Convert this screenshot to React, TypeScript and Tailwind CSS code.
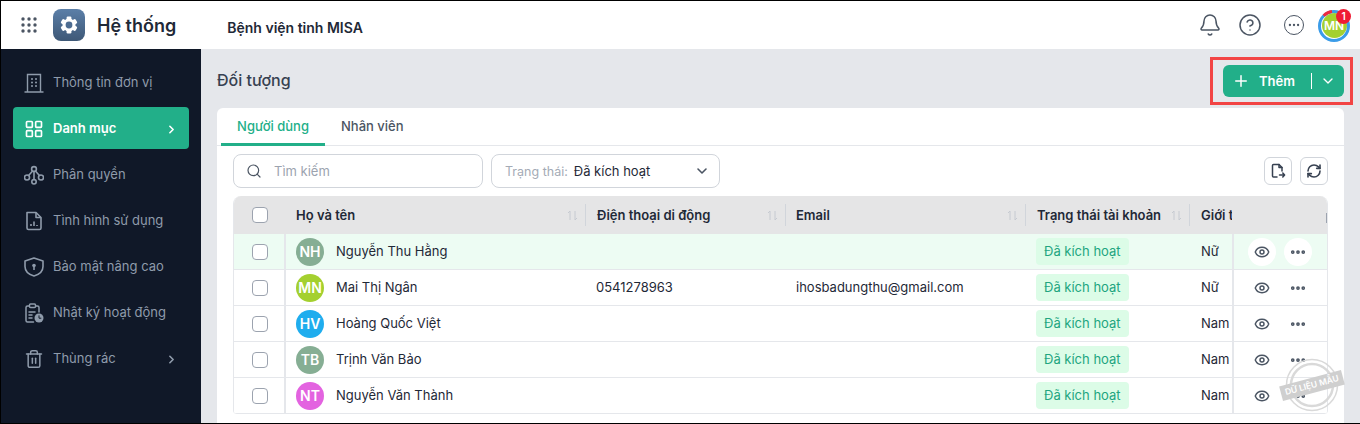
import React from "react";
import { Bell, ChevronDown, ChevronRight, CircleHelp, Ellipsis, Eye, Plus, RefreshCw, Search, Trash2, LayoutGrid } from "lucide-react";

const Apps = () => (
  <svg width="16" height="16" viewBox="0 0 16 16" fill="#4b5563">
    {[2, 8, 14].map((y) => [2, 8, 14].map((x) => <circle key={`${x}-${y}`} cx={x} cy={y} r="1.7" />))}
  </svg>
);

const Logo = () => (
  <div className="w-8 h-8 rounded-lg bg-gradient-to-b from-[#5b7fa8] to-[#3e5877] flex items-center justify-center">
    <svg width="20" height="20" viewBox="0 0 20 20">
      {[0, 60, 120].map((a) => (
        <rect key={a} x="7.600" y="1.500" width="4.800" height="17" rx="1.200" fill="#fff" transform={`rotate(${a} 10 10)`} />
      ))}
      <circle cx="10" cy="10" r="6.500" fill="#fff" />
      <circle cx="10" cy="10" r="3.400" fill="#4d6c91" />
    </svg>
  </div>
);

const BuildingIcon = () => (
  <svg width="20" height="20" viewBox="0 0 20 20" fill="none" stroke="currentColor" strokeWidth="1.4">
    <path d="M3.500 19V1.500h13V19M0.500 19h19" />
    <path d="M8 6h.01M12 6h.01M8 9.500h.01M12 9.500h.01M8 13h.01M12 13h.01" strokeWidth="2" strokeLinecap="round" />
  </svg>
);

const TreeIcon = () => (
  <svg width="20" height="20" viewBox="0 0 20 20" fill="none" stroke="currentColor" strokeWidth="1.6">
    <circle cx="10" cy="4" r="2.400" />
    <circle cx="3" cy="12.500" r="2.500" />
    <circle cx="17" cy="12.500" r="2.500" />
    <circle cx="10" cy="16.800" r="2.200" />
    <path d="M8.600 6L4.600 10.500M11.400 6l4 4.500M10 6.400v8.200" />
  </svg>
);

const ReportIcon = () => (
  <svg width="20" height="20" viewBox="0 0 20 20" fill="none" stroke="currentColor" strokeWidth="1.6" strokeLinejoin="round">
    <path d="M3 1.500h9l5 5v10.500a1.500 1.500 0 0 1-1.500 1.500h-11A1.500 1.500 0 0 1 3 17z" />
    <path d="M12 1.500v5h5M7 15v-2M10 15v-4.500M13 15v-1" />
  </svg>
);

const ShieldIcon = () => (
  <svg width="20" height="20" viewBox="0 0 20 20" fill="none" stroke="currentColor" strokeWidth="1.6" strokeLinejoin="round">
    <path d="M10 1l9 3v5.500c0 4.800-3.800 8-9 9.500-5.200-1.500-9-4.700-9-9.500V4z" />
    <circle cx="10" cy="8.500" r="1.800" fill="currentColor" stroke="none" />
    <path d="M10 9.500v3.500" />
  </svg>
);

const LogIcon = () => (
  <svg width="20" height="20" viewBox="0 0 20 20" fill="none" stroke="currentColor" strokeWidth="1.5" strokeLinecap="round">
    <path d="M5 3H3.500A1.500 1.500 0 0 0 2 4.500v13A1.500 1.500 0 0 0 3.500 19h6M12 3h1.500A1.500 1.500 0 0 1 15 4.500V9" />
    <rect x="5.500" y="1" width="6" height="3.500" rx="1" />
    <path d="M5 9h6M5 12h3M5 15h3" />
    <circle cx="15" cy="15" r="4.500" fill="currentColor" stroke="none" />
    <path d="M15 12.800v2.400h1.900" stroke="#101828" strokeWidth="1" />
  </svg>
);

const ExportIcon = () => (
  <svg width="16" height="16" viewBox="0 0 16 16" fill="none" stroke="#374151" strokeWidth="1.500" strokeLinejoin="round" strokeLinecap="round">
    <path d="M7 14H3.500A1 1 0 0 1 2.500 13V2.500a1 1 0 0 1 1-1H9l3 3V8" />
    <path d="M9 1.500v3h3M9.500 12h5M12.800 10l1.800 2-1.800 2" />
  </svg>
);

const SortIcon = () => (
  <svg width="11" height="11" viewBox="0 0 11 11" fill="none" stroke="#c6cad1" strokeWidth="1">
    <path d="M3 10V1L1 3M8 1v9l2-2" />
  </svg>
);

const AvatarRing = () => (
  <svg width="32" height="32" viewBox="0 0 32 32" fill="none" strokeWidth="3" className="absolute inset-0">
    <circle cx="16" cy="16" r="14.500" stroke="#3b9ce8" />
    <path d="M5.700 5.700A14.500 14.500 0 0 1 14 1.600" stroke="#ef2b3f" />
  </svg>
);

const menu = [
  { label: "Thông tin đơn vị", icon: <BuildingIcon /> },
  { label: "Danh mục", icon: <LayoutGrid size={24} strokeWidth={2} />, active: true, arrow: true },
  { label: "Phân quyền", icon: <TreeIcon /> },
  { label: "Tình hình sử dụng", icon: <ReportIcon /> },
  { label: "Bảo mật nâng cao", icon: <ShieldIcon /> },
  { label: "Nhật ký hoạt động", icon: <LogIcon /> },
  { label: "Thùng rác", icon: <Trash2 size={24} strokeWidth={1.8} />, arrow: true },
];

const rows = [
  { code: "NH", color: "bg-[#86ae94]", name: "Nguyễn Thu Hằng", gender: "Nữ", hover: true },
  { code: "MN", color: "bg-[#a4d02f]", name: "Mai Thị Ngân", phone: "0541278963", email: "ihosbadungthu@gmail.com", gender: "Nữ" },
  { code: "HV", color: "bg-[#1fadee]", name: "Hoàng Quốc Việt", gender: "Nam" },
  { code: "TB", color: "bg-[#86ae94]", name: "Trịnh Văn Bảo", gender: "Nam" },
  { code: "NT", color: "bg-[#e363e0]", name: "Nguyễn Văn Thành", gender: "Nam" },
];

const Check = () => <div className="w-[16px] h-[16px] rounded-[4px] border border-[#9ca3af] bg-white" />;

const HeadCell = ({ label, className }: { label: string; className: string }) => (
  <div className={`flex items-center justify-between h-full ${className}`}>
    <span className="font-semibold text-[#1f2937] whitespace-nowrap pt-[2px]">{label}</span>
    <div className="flex items-center gap-[7px] h-[22px]">
      <SortIcon />
      <div className="w-px h-full bg-[#d1d5db]" />
    </div>
  </div>
);

export default function App() {
  return (
    <div className="w-[1360px] h-[424px] overflow-hidden border-l border-t border-b border-black flex flex-col text-[13px] text-[#1f2937] relative" style={{ fontFamily: "Inter, 'Noto Sans', sans-serif" }}>
      <header className="h-[48px] shrink-0 bg-white flex items-center pl-[20px] pr-[10px]">
        <Apps />
        <div className="ml-[16px]"><Logo /></div>
        <span className="ml-[12px] text-[18px] font-semibold text-[#1f2937]">Hệ thống</span>
        <span className="ml-[51px] text-[14px] font-semibold text-[#1f2937] pt-[4px]">Bệnh viện tỉnh MISA</span>
        <div className="ml-auto flex items-center text-[#4b5563]">
          <Bell size={24} strokeWidth={1.5} />
          <CircleHelp size={24} strokeWidth={1.5} className="ml-[16px]" />
          <div className="ml-[22px] w-[20px] h-[20px] rounded-full border-[1.5px] border-[#4b5563] flex items-center justify-center">
            <Ellipsis size={14} />
          </div>
          <div className="ml-[14px] w-[32px] h-[32px] rounded-full flex items-center justify-center relative mt-[1px]">
            <AvatarRing />
            <div className="w-[25px] h-[25px] rounded-full bg-[#a4d02f] text-white text-[12px] font-semibold flex items-center justify-center">MN</div>
            <div className="absolute -top-px -right-px w-[15px] h-[15px] rounded-full bg-[#ef1c35] text-white text-[10px] font-semibold flex items-center justify-center">1</div>
          </div>
        </div>
      </header>

      <div className="flex flex-1 min-h-0">
        <aside className="w-[200px] shrink-0 bg-[#101828] px-[12px] pt-[12px]">
          {menu.map((m) => (
            <div key={m.label} className={`h-[42px] mb-[4px] pt-[2px] rounded-[4px] flex items-center pl-[11px] pr-[11px] ${m.active ? "bg-[#22af89] text-white font-semibold" : "text-[#8f9bab]"}`}>
              <span className="w-[20px] flex justify-center">{m.icon}</span>
              <span className="ml-[9px]">{m.label}</span>
              {m.arrow && <ChevronRight size={13} strokeWidth={3} className="ml-auto" />}
            </div>
          ))}
        </aside>

        <main className="flex-1 min-w-0 bg-[#e5e7eb] pl-[16px] pr-[16px] flex flex-col">
          <div className="h-[59px] shrink-0 flex items-center justify-between">
            <h1 className="text-[16px] font-medium text-[#374151] mt-[2px]">Đối tượng</h1>
            <div className="border-[3px] border-[#f24444] pl-[10px] pr-[6px] py-[5px] mt-[4px] -mr-[9px]">
              <div className="w-[121px] h-[32px] rounded-[6px] bg-[#22af89] text-white flex items-center pl-[9px]">
                <Plus size={18} strokeWidth={2} />
                <span className="ml-[9px] font-semibold pt-[2px]">Thêm</span>
                <div className="ml-[16px] w-px h-[16px] bg-white" />
                <ChevronDown size={16} strokeWidth={2} className="ml-[8px]" />
              </div>
            </div>
          </div>

          <div className="flex-1 bg-white rounded-t-[6px] flex flex-col min-h-0">
            <div className="h-[38px] shrink-0 border-b border-[#e5e7eb] flex px-[4px]">
              <div className="w-[104px] flex items-center justify-center text-[#22af89] font-medium border-b-[3px] border-[#22af89] h-[38px] pt-[2px]">Người dùng</div>
              <div className="ml-[16px] font-medium text-[#4b5563] h-[37px] flex items-center">Nhân viên</div>
            </div>

            <div className="h-[50px] shrink-0 flex items-center px-[16px]">
              <div className="w-[250px] h-[34px] rounded-[8px] border border-[#d1d5db] flex items-center pl-[12px] text-[#9ca3af]">
                <Search size={16} strokeWidth={1.8} className="text-[#4b5563]" />
                <span className="ml-[12px] pt-[2px]">Tìm kiếm</span>
              </div>
              <div className="ml-[8px] w-[229px] h-[34px] rounded-[8px] border border-[#d1d5db] flex items-center pl-[13px] pr-[9px]">
                <span className="text-[#a4abb6] text-[12.5px] pt-[2px]">Trạng thái:</span>
                <span className="ml-[6px] text-[#1f2937] pt-[2px]">Đã kích hoạt</span>
                <ChevronDown size={16} strokeWidth={2.4} className="ml-auto text-[#4b5563]" />
              </div>
              <div className="ml-auto w-[28px] h-[28px] rounded-[6px] border border-[#d1d5db] flex items-center justify-center">
                <ExportIcon />
              </div>
              <div className="ml-[8px] w-[28px] h-[28px] rounded-[6px] border border-[#d1d5db] flex items-center justify-center">
                <RefreshCw size={16} strokeWidth={2.4} className="text-[#374151]" />
              </div>
            </div>

            <div className="mx-[16px] rounded-t-[8px] rounded-b-[4px] border-x border-[#e5e7eb] overflow-hidden">
              <div className="h-[38px] bg-[#e5e5e6] flex items-center relative">
                <div className="w-[51px] flex justify-center pl-[1px]"><Check /></div>
                <HeadCell label="Họ và tên" className="w-[301px] pl-[11px]" />
                <HeadCell label="Điện thoại di động" className="w-[200px] pl-[11px]" />
                <HeadCell label="Email" className="w-[240px] pl-[10px]" />
                <HeadCell label="Trạng thái tài khoản" className="w-[164px] pl-[11px]" />
                <div className="pl-[11px] font-semibold whitespace-nowrap w-[42px] overflow-hidden pt-[2px]">Giới tính</div>
                <div className="ml-auto w-[1px] h-[10px] bg-[#9ca3af] mt-[6px]" />
              </div>
              {rows.map((r) => (
                <div key={r.code} className={`h-[36px] flex items-center border-b border-[#e5e7eb] ${r.hover ? "bg-[#edfcf3]" : "bg-white"}`}>
                  <div className="w-[52px] h-full flex items-center justify-center border-r-2 border-[#e5e7eb] pl-[2px]"><Check /></div>
                  <div className="w-[299px] flex items-center pl-[10px]">
                    <div className={`w-[28px] h-[28px] rounded-full ${r.color} text-white font-semibold text-[14px] flex items-center justify-center`}>{r.code}</div>
                    <span className="ml-[12px]">{r.name}</span>
                  </div>
                  <div className="w-[200px] pl-[11px]">{r.phone}</div>
                  <div className="w-[240px] pl-[11px]">{r.email}</div>
                  <div className="w-[164px] pl-[11px]">
                    <span className="inline-flex items-center h-[27px] px-[8px] rounded-[4px] bg-[#dcfce7] text-[#22a57f]">Đã kích hoạt</span>
                  </div>
                  <div className="w-[43px] pl-[12px]">{r.gender}</div>
                  <div className="flex-1 h-full flex items-center border-l-2 border-[#e5e7eb] pl-[14px] gap-[8px]">
                    <div className={`w-[28px] h-[28px] rounded-full flex items-center justify-center ${r.hover ? "bg-white" : ""}`}><Eye size={16} strokeWidth={2.2} className="text-[#4b5563]" /></div>
                    <div className={`w-[28px] h-[28px] rounded-full flex items-center justify-center ${r.hover ? "bg-white" : ""}`}><Ellipsis size={18} strokeWidth={3} className="text-[#4b5563]" /></div>
                  </div>
                </div>
              ))}
            </div>
          </div>
        </main>
      </div>

      <div className="absolute left-[1284px] top-[357px] w-[54px] h-[54px] pointer-events-none">
        <svg width="54" height="54" viewBox="0 0 54 54" fill="none" stroke="#d9d9d9">
          <circle cx="27" cy="27" r="25.500" strokeWidth="1.500" />
          <circle cx="27" cy="27" r="21" strokeWidth="2.500" />
        </svg>
        <div className="absolute left-[-5px] top-[20px] w-[64px] h-[15px] bg-[#cfcfcf] text-white text-[8.5px] font-semibold flex items-center justify-center -rotate-[15deg] whitespace-nowrap">DỮ LIỆU MẪU</div>
      </div>
    </div>
  );
}
